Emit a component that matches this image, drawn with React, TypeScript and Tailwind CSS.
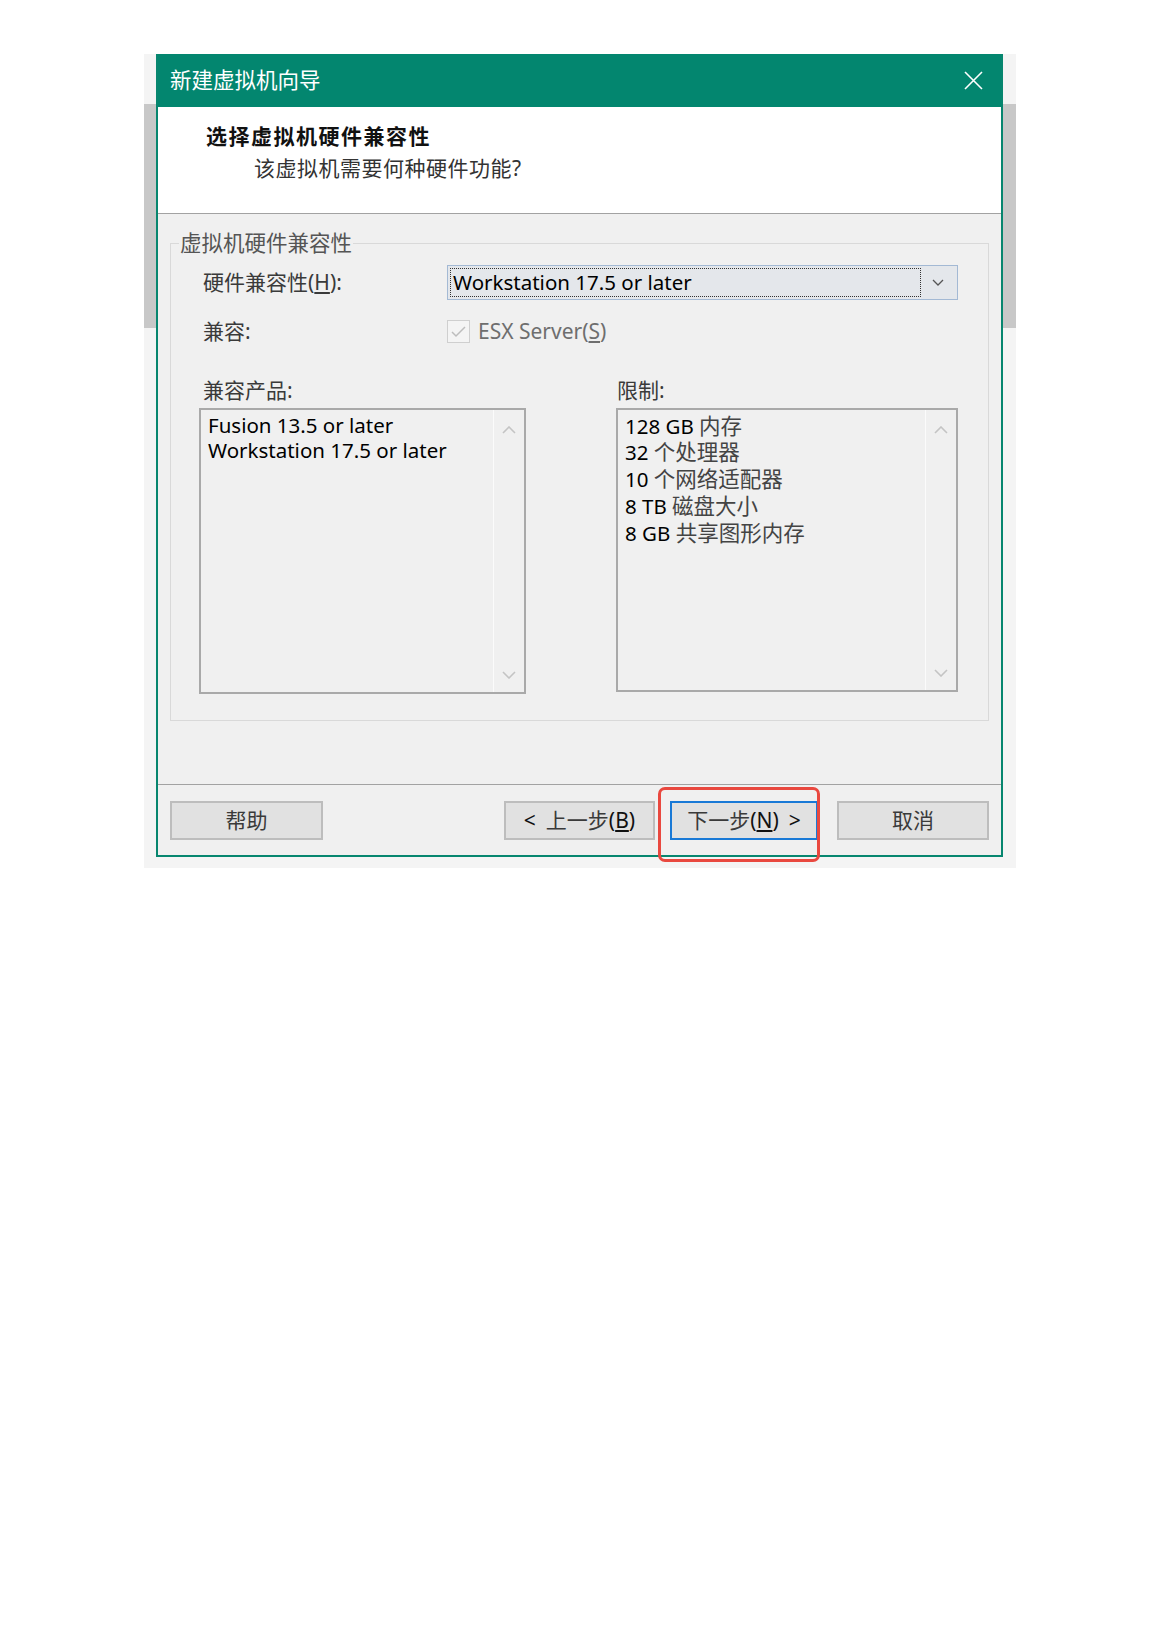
import React from "react";

const Chevron = ({ up, className }: { up?: boolean; className?: string }): JSX.Element => (
  <svg width="14" height="8" viewBox="0 0 14 8" className={className}>
    <path d={up ? "M1 7 L7 1 L13 7" : "M1 1 L7 7 L13 1"} fill="none" stroke="currentColor" strokeWidth="1.6" />
  </svg>
);

const ListBox = ({ children, height }: { children: React.ReactNode; height: string }): JSX.Element => (
  <div className={`flex border-2 border-[#a9a9a9] bg-[#f0f0f0] ${height}`}>
    <div className="flex-1 pl-[7px] pt-[3px] text-[20.5px] leading-[25.75px] text-[#000]">{children}</div>
    <div className="flex w-[31px] flex-col items-center justify-between border-l border-[#fbfbfb] pt-[16px] pb-[13px] text-[#c4c4c4]">
      <Chevron up />
      <Chevron />
    </div>
  </div>
);

const Button = ({ children, focused }: { children: React.ReactNode; focused?: boolean }): JSX.Element => (
  <div
    className={`flex h-[39px] items-center justify-center bg-[#e1e1e1] text-[21px] text-[#3a3a3a]
      ${focused ? "border-2 border-[#1979d6]" : "border-2 border-[#bdbdbd]"}`}
  >
    {children}
  </div>
);

const App = (): JSX.Element => {
  return (
    <div className="min-h-[1639px] w-[1159px] bg-white pt-[54px] pl-[144px] font-['Noto_Sans','Noto_Sans_CJK_SC',sans-serif]">
      <div className="relative w-[872px] bg-[#f4f4f4] pb-[11px]">
        <div className="flex">
          {/* window behind, left edge */}
          <div className="w-[12px] pt-[50px]">
            <div className="h-[224px] bg-[#c8c8c8]" />
          </div>

          {/* Dialog */}
          <div className="w-[847px] border-2 border-t-0 border-[#07866f] bg-[#f0f0f0]">
            {/* Title bar */}
            <div className="flex h-[53px] items-center justify-between bg-[#03866f] pl-[12px] pr-[18px]">
              <span className="text-[21.5px] text-white">新建虚拟机向导</span>
              <svg width="19" height="19" viewBox="0 0 19 19">
                <path d="M1 1 L18 18 M18 1 L1 18" stroke="#fff" strokeWidth="1.6" />
              </svg>
            </div>

            {/* Header */}
            <div className="h-[107px] border-b border-[#a2a2a2] bg-white pt-[13px] leading-[32px]">
              <div className="pl-[48px] text-[21px] font-bold tracking-[1.5px] text-[#111]">选择虚拟机硬件兼容性</div>
              <div className="pl-[96px] text-[21px] tracking-[0.5px] text-[#333]">该虚拟机需要何种硬件功能?</div>
            </div>

            {/* Body */}
            <div className="h-[570px] px-[12px] pt-[15px]">
              <fieldset className="border border-[#d9d9d9] pb-[26px]">
                <legend className="ml-[8px] px-[1px] text-[21.5px] leading-[28px] text-[#555]">虚拟机硬件兼容性</legend>
                <div className="pt-[8px]">
                  <div className="flex items-center pl-[32px]">
                    <span className="w-[244px] text-[21px] text-[#3a3a3a]">
                      硬件兼容性(<span className="underline underline-offset-2">H</span>):
                    </span>
                    <div className="flex h-[35px] w-[511px] items-center border border-[#a3b9d4] bg-[#e4e7eb] p-[2px]">
                      <div className="flex h-full flex-1 items-center border border-dotted border-[#333] pl-[2px] text-[20.5px] text-[#000]">
                        Workstation 17.5 or later
                      </div>
                      <div className="flex w-[34px] justify-center text-[#555]">
                        <svg width="12" height="7" viewBox="0 0 12 7">
                          <path d="M1 1 L6 6 L11 1" fill="none" stroke="currentColor" strokeWidth="1.3" />
                        </svg>
                      </div>
                    </div>
                  </div>

                  <div className="mt-[16px] flex items-center pl-[32px]">
                    <span className="w-[244px] text-[21px] text-[#3a3a3a]">兼容:</span>
                    <div className="flex h-[23px] w-[23px] items-center justify-center border border-[#cfcfcf] bg-[#f4f4f4]">
                      <svg width="15" height="12" viewBox="0 0 15 12">
                        <path d="M1 6 L5 10 L14 1" fill="none" stroke="#bdbdbd" strokeWidth="1.5" />
                      </svg>
                    </div>
                    <span className="ml-[8px] text-[21px] text-[#6e6e6e]">
                      ESX Server(<span className="underline underline-offset-2">S</span>)
                    </span>
                  </div>

                  <div className="mt-[28px] grid grid-cols-[327px_342px] gap-x-[90px] pl-[28px]">
                    <div className="pl-[4px] text-[21px] leading-[28px] text-[#3a3a3a]">兼容产品:</div>
                    <div className="pl-[1px] text-[21px] leading-[28px] text-[#3a3a3a]">限制:</div>
                    <div className="mt-[4px]">
                      <ListBox height="h-[286px]">
                        <div>Fusion 13.5 or later</div>
                        <div>Workstation 17.5 or later</div>
                      </ListBox>
                    </div>
                    <div className="mt-[4px]">
                      <ListBox height="h-[284px]">
                        <div>
                          128 GB <span className="text-[21.5px] text-[#444]">内存</span>
                        </div>
                        <div>
                          32 <span className="text-[21.5px] text-[#444]">个处理器</span>
                        </div>
                        <div>
                          10 <span className="text-[21.5px] text-[#444]">个网络适配器</span>
                        </div>
                        <div>
                          8 TB <span className="text-[21.5px] text-[#444]">磁盘大小</span>
                        </div>
                        <div>
                          8 GB <span className="text-[21.5px] text-[#444]">共享图形内存</span>
                        </div>
                      </ListBox>
                    </div>
                  </div>
                </div>
              </fieldset>
            </div>

            {/* Footer */}
            <div className="flex border-t border-[#a2a2a2] px-[12px] pt-[16px] pb-[15px]">
              <div className="w-[153px]">
                <Button>帮助</Button>
              </div>
              <div className="flex-1" />
              <div className="w-[151px]">
                <Button>
                  <span className="text-[#111]">&lt;</span>
                  <span className="ml-[10px]">上一步</span>
                  <span className="text-[#111]">
                    (<span className="underline underline-offset-2">B</span>)
                  </span>
                </Button>
              </div>
              <div className="ml-[15px] w-[148px]">
                <Button focused>
                  <span>下一步</span>
                  <span className="text-[#111]">
                    (<span className="underline underline-offset-2">N</span>)
                  </span>
                  <span className="ml-[10px] text-[#111]">&gt;</span>
                </Button>
              </div>
              <div className="ml-[19px] w-[152px]">
                <Button>取消</Button>
              </div>
            </div>
          </div>

          {/* window behind, right edge */}
          <div className="w-[13px] pt-[50px]">
            <div className="h-[224px] bg-[#c8c8c8]" />
          </div>
        </div>

        {/* red highlight around next button */}
        <div className="absolute left-[514px] top-[733px] h-[75px] w-[162px] rounded-[7px] border-[3px] border-[#e9483f]" />
      </div>
    </div>
  );
};

export default App;
